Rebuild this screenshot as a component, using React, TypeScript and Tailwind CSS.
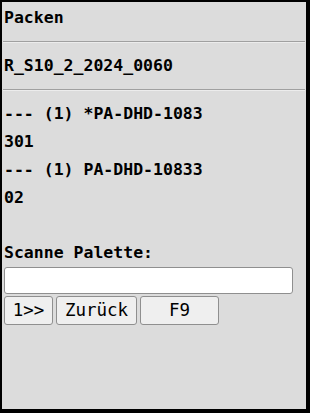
const mono = "font-['DejaVu_Sans_Mono',monospace]";

function Rule() {
  return <div className="mx-[1px] border-t border-b border-t-[#a0a0a0] border-b-[#ececec]" />;
}

function Line({ children }: { children: React.ReactNode }) {
  return <div className="h-[28px] whitespace-pre leading-[28px]">{children}</div>;
}

const buttons = [
  { label: "1>>", width: "w-[49px]" },
  { label: "Zurück", width: "w-[81px]" },
  { label: "F9", width: "w-[79px]" },
];

export default function App() {
  return (
    <div
      className={`h-[413px] w-[310px] overflow-hidden border-t-2 border-r-4 border-b-4 border-l-2 border-black bg-[#dcdcdc] text-[16.5px] font-bold text-black ${mono}`}
    >
      <div className="pt-[2px] pl-[2px]">
        <Line>Packen</Line>
      </div>
      <div className="mt-[9px]">
        <Rule />
      </div>
      <div className="mt-[9px] pl-[2px]">
        <Line>R_S10_2_2024_0060</Line>
      </div>
      <div className="mt-[9px]">
        <Rule />
      </div>
      <div className="mt-[9px] pl-[2px]">
        <Line>--- (1) *PA-DHD-1083</Line>
        <Line>301</Line>
        <Line>--- (1) PA-DHD-10833</Line>
        <Line>02</Line>
        <Line>{" "}</Line>
        <div className="h-[27px] leading-[26px]">Scanne Palette:</div>
        <input
          type="text"
          className="block h-[27px] w-[289px] rounded-[3px] border border-[#8f8f8f] bg-white px-1 font-normal outline-none"
        />
        <div className="mt-[2px] flex gap-[3px]">
          {buttons.map((b) => (
            <button
              key={b.label}
              type="button"
              className={`${b.width} h-[29px] rounded-[3px] border border-[#8f8f8f] bg-[#efefef] text-center text-[17.5px] font-normal leading-none`}
            >
              {b.label}
            </button>
          ))}
        </div>
      </div>
    </div>
  );
}
